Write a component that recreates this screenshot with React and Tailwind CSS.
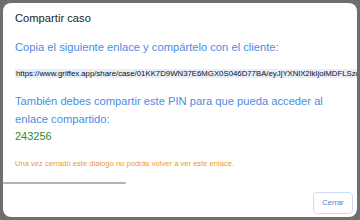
export default function App() {
  const url =
    "https://www.griffex.app/share/case/01KK7D9WN37E6MGX0S046D77BA/eyJjYXNlX2lkIjoiMDFLSzc3RDlXTjM3RTZNR1gwUzA0NkQ3N0JBIn0";

  return (
    <div className="h-[220px] w-[360px] overflow-hidden bg-[#6e6e6e] pl-[3px] pt-[3px] font-['Liberation_Sans',Arial,sans-serif]">
      <div className="flex h-[214px] w-[354px] flex-col overflow-hidden rounded-[8px] bg-white">
        {/* Titre */}
        <div className="px-[12px] pt-[7px] text-[11.2px] leading-[16px] text-[#222]">Compartir caso</div>

        {/* Contenu */}
        <div className="relative flex-1 overflow-hidden">
          <div className="px-[12px] pt-[12px]">
            <p className="whitespace-nowrap text-[11.2px] leading-[18px] text-[#4a8ce6]">
              Copia el siguiente enlace y compártelo con el cliente:
            </p>
            <div className="mt-[9px] whitespace-nowrap leading-[11px]">
              <span className="bg-[#e6eefa] px-[1px] text-[7.8px] leading-[11px] text-[#111]">{url}</span>
            </div>
            <p className="mt-[13px] whitespace-nowrap text-[11.2px] leading-[18px] text-[#4a8ce6]">
              También debes compartir este PIN para que pueda acceder al
              <br />
              enlace compartido:
            </p>
            <p className="text-[11px] leading-[16px] text-[#2e8b2e]">243256</p>
            <p className="mt-[14px] whitespace-nowrap text-[7.6px] leading-[12px] text-[#f0982a]">
              Una vez cerrado este dialogo no podrás volver a ver este enlace.
            </p>
          </div>
          {/* Barre de défilement */}
          <div className="absolute bottom-[3px] left-0 h-[2px] w-[123px] rounded-full bg-[#b4b4b4]" />
        </div>

        {/* Actions */}
        <div className="flex justify-end px-[4px] pb-[3px] pt-[5px]">
          <button
            type="button"
            className="h-[22px] w-[40px] rounded-[4px] border border-[#c9dbf5] text-[7.5px] text-[#4a7fd0]"
          >
            Cerrar
          </button>
        </div>
      </div>
    </div>
  );
}
